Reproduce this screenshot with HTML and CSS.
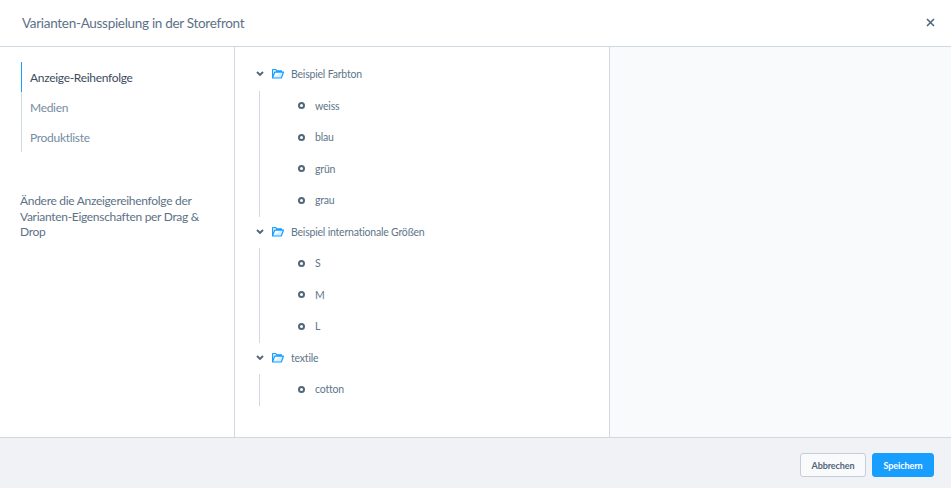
FILE: index.html
```html
<!DOCTYPE html>
<html lang="de">
<head>
<meta charset="utf-8">
<title>Varianten-Ausspielung in der Storefront</title>
<link rel="stylesheet" href="styles.css">
</head>
<body>
<div class="modal">
  <header class="head">
    <h1 class="title">Varianten-Ausspielung in der Storefront</h1>
    <svg class="close" width="9" height="9" viewBox="0 0 9 9"><path d="M1 1l7 7M8 1L1 8" stroke="#52667a" stroke-width="1.6" fill="none"/></svg>
  </header>
  <main class="body">
    <aside class="side">
      <nav class="tabs">
        <a class="tab active">Anzeige-Reihenfolge</a>
        <a class="tab">Medien</a>
        <a class="tab">Produktliste</a>
      </nav>
      <p class="hint">Ändere die Anzeigereihenfolge der Varianten-Eigenschaften per Drag &amp; Drop</p>
    </aside>
    <section class="tree">
      <div class="group">
        <div class="row parent">
          <svg class="chev" width="8" height="6" viewBox="0 0 8 6"><path d="M1 1l3 3 3-3" stroke="#52667a" stroke-width="1.9" fill="none"/></svg>
          <svg class="folder" width="12" height="10" viewBox="0 0 12 10"><path d="M.5 9V1.200a.7.700 0 0 1 .7-.7h2.600l1 1.300h4.700v1.400M.5 9h8.800l2.200-5.800H2.700L.5 9z" stroke="#189eff" stroke-width="1.200" fill="#d6eeff" stroke-linejoin="round"/></svg>
          <span>Beispiel Farbton</span>
        </div>
        <div class="kids">
          <div class="row leaf"><i class="dot"></i><span>weiss</span></div>
          <div class="row leaf"><i class="dot"></i><span>blau</span></div>
          <div class="row leaf"><i class="dot"></i><span>grün</span></div>
          <div class="row leaf"><i class="dot"></i><span>grau</span></div>
        </div>
      </div>
      <div class="group">
        <div class="row parent">
          <svg class="chev" width="8" height="6" viewBox="0 0 8 6"><path d="M1 1l3 3 3-3" stroke="#52667a" stroke-width="1.9" fill="none"/></svg>
          <svg class="folder" width="12" height="10" viewBox="0 0 12 10"><path d="M.5 9V1.200a.7.700 0 0 1 .7-.7h2.600l1 1.300h4.700v1.400M.5 9h8.800l2.200-5.800H2.700L.5 9z" stroke="#189eff" stroke-width="1.200" fill="#d6eeff" stroke-linejoin="round"/></svg>
          <span>Beispiel internationale Größen</span>
        </div>
        <div class="kids">
          <div class="row leaf"><i class="dot"></i><span>S</span></div>
          <div class="row leaf"><i class="dot"></i><span>M</span></div>
          <div class="row leaf"><i class="dot"></i><span>L</span></div>
        </div>
      </div>
      <div class="group">
        <div class="row parent">
          <svg class="chev" width="8" height="6" viewBox="0 0 8 6"><path d="M1 1l3 3 3-3" stroke="#52667a" stroke-width="1.9" fill="none"/></svg>
          <svg class="folder" width="12" height="10" viewBox="0 0 12 10"><path d="M.5 9V1.200a.7.700 0 0 1 .7-.7h2.600l1 1.300h4.700v1.400M.5 9h8.800l2.200-5.800H2.700L.5 9z" stroke="#189eff" stroke-width="1.200" fill="#d6eeff" stroke-linejoin="round"/></svg>
          <span>textile</span>
        </div>
        <div class="kids">
          <div class="row leaf"><i class="dot"></i><span>cotton</span></div>
        </div>
      </div>
    </section>
    <section class="preview"></section>
  </main>
  <footer class="foot">
    <button class="btn">Abbrechen</button>
    <button class="btn primary">Speichern</button>
  </footer>
</div>
</body>
</html>
```
FILE: styles.css
```css
* { box-sizing: border-box; }
html, body { margin: 0; height: 100%; }
body { font-family: "Lato", "Noto Sans", sans-serif; background: #fff; color: #52667a; overflow: hidden; }
.modal { display: flex; flex-direction: column; height: 488px; width: 951px; }
.head { height: 47px; flex: none; display: flex; align-items: center; justify-content: space-between; padding: 0 16px 1px 22px; border-bottom: 1px solid #d1d9e0; }
.title { margin: 0; font-size: 13.500px; font-weight: 400; letter-spacing: -.3px; color: #5d7186; }
.body { flex: 1; display: flex; min-height: 0; }
.side { width: 235px; flex: none; border-right: 1px solid #d1d9e0; padding: 15px 20px 0 20px; }
.tabs { display: flex; flex-direction: column; border-left: 1px solid #d1d9e0; margin-left: 1px; }
.tab { height: 30px; display: flex; align-items: center; padding-left: 8px; margin-left: -1px; border-left: 1px solid transparent; font-size: 12px; letter-spacing: -.3px; color: #758ca3; }
.tab.active { color: #3d4c5c; border-left-color: #189eff; }
.hint { margin: 41px 0 0; font-size: 12px; letter-spacing: -.3px; line-height: 15.500px; color: #5d7186; }
.tree { width: 375px; flex: none; border-right: 1px solid #d1d9e0; padding: 11.300px 0 0 21px; font-size: 10.500px; letter-spacing: -.2px; color: #607589; }
.row { height: 31.500px; display: flex; align-items: center; }
.parent .chev { margin-right: 8px; }
.parent .folder { margin-right: 7px; }
.kids { margin-left: 3px; position: relative; padding-left: 39px; }
.kids::before { content: ""; position: absolute; left: 0; top: 1.200px; bottom: -1.200px; width: 1px; background: #d1d9e0; }
.dot { width: 7px; height: 7px; border: 2px solid #52667a; border-radius: 50%; margin-right: 10px; }
.preview { flex: 1; background: #f9fafb; }
.foot { height: 51px; flex: none; display: flex; justify-content: flex-end; align-items: center; gap: 6px; padding: 4px 17px 0 0; background: #f0f2f5; border-top: 1px solid #d1d9e0; }
.btn { height: 24px; padding: 0; width: 66px; border: 1px solid #c3ced8; border-radius: 3px; background: #f9fafb; color: #52667a; font: 700 9px "Lato", sans-serif; letter-spacing: -.1px; }
.primary { width: 62px; border-color: #189eff; background: #189eff; color: #fff; }
```
